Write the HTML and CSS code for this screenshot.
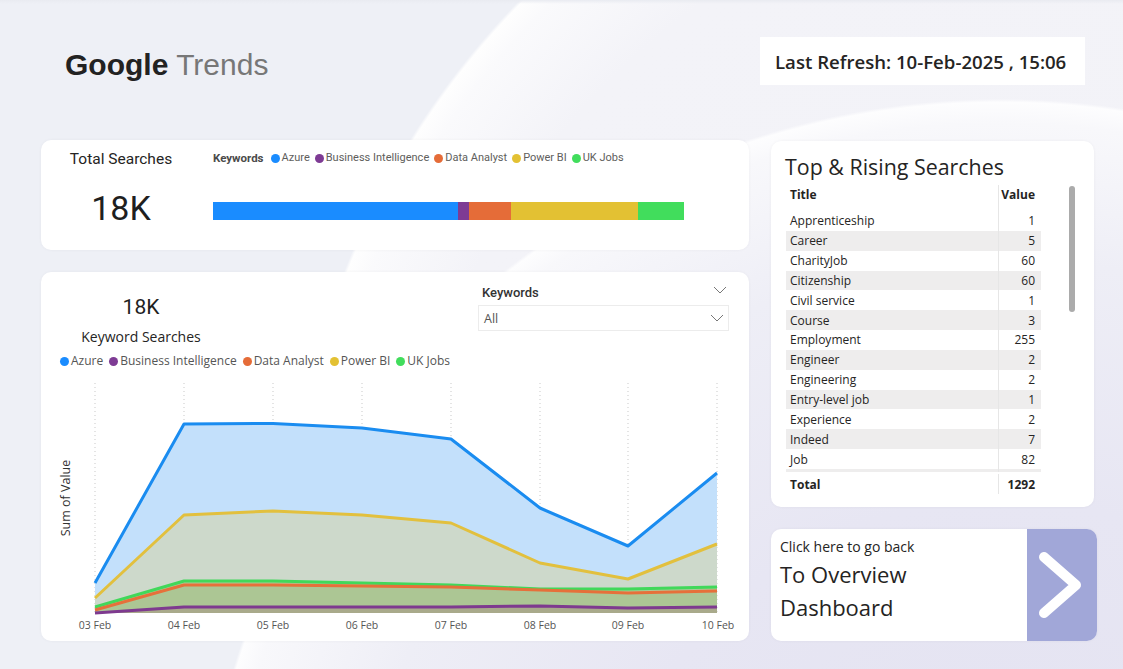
FILE: index.html
```html
<!DOCTYPE html>
<html lang="en">
<head>
<meta charset="utf-8">
<title>Google Trends</title>
<link rel="stylesheet" href="styles.css">
</head>
<body>
<div class="page">
  <div class="col-left">
    <h1 class="title"><b>Google</b> <span>Trends</span></h1>

    <section class="card card-total">
      <div class="kpi">
        <div class="kpi-label">Total Searches</div>
        <div class="kpi-value">18K</div>
      </div>
      <div class="breakdown">
        <div class="legend legend-din">
          <span class="legend-title">Keywords</span>
          <span class="li"><i class="dot azure"></i>Azure</span>
          <span class="li"><i class="dot bi"></i>Business Intelligence</span>
          <span class="li"><i class="dot da"></i>Data Analyst</span>
          <span class="li"><i class="dot pbi"></i>Power BI</span>
          <span class="li"><i class="dot uk"></i>UK Jobs</span>
        </div>
        <div class="bar">
          <div class="seg azure" style="width:245px"></div>
          <div class="seg bi" style="width:11px"></div>
          <div class="seg da" style="width:42px"></div>
          <div class="seg pbi" style="width:127px"></div>
          <div class="seg uk" style="width:46px"></div>
        </div>
      </div>
    </section>

    <section class="card card-chart">
      <div class="chart-head">
        <div class="kpi2">
          <div class="kpi2-value">18K</div>
          <div class="kpi2-label">Keyword Searches</div>
        </div>
        <div class="slicer">
          <div class="slicer-head">
            <span>Keywords</span>
            <svg class="chev" width="14" height="8" viewBox="0 0 14 8"><path d="M1 1 L7 7 L13 1" fill="none" stroke="#777" stroke-width="1"/></svg>
          </div>
          <div class="slicer-box">
            <span>All</span>
            <svg class="chev" width="14" height="8" viewBox="0 0 14 8"><path d="M1 1 L7 7 L13 1" fill="none" stroke="#777" stroke-width="1"/></svg>
          </div>
        </div>
      </div>
      <div class="legend legend-chart">
        <span class="li"><i class="dot azure"></i>Azure</span>
        <span class="li"><i class="dot bi"></i>Business Intelligence</span>
        <span class="li"><i class="dot da"></i>Data Analyst</span>
        <span class="li"><i class="dot pbi"></i>Power BI</span>
        <span class="li"><i class="dot uk"></i>UK Jobs</span>
      </div>
      <svg class="chart" width="708" height="262" viewBox="41 375 708 262">
        <g class="grid" stroke="#c9c9c9" stroke-width="1" stroke-dasharray="1 3">
          <line x1="95" y1="383" x2="95" y2="613"/>
          <line x1="184" y1="383" x2="184" y2="613"/>
          <line x1="273" y1="383" x2="273" y2="613"/>
          <line x1="362" y1="383" x2="362" y2="613"/>
          <line x1="451" y1="383" x2="451" y2="613"/>
          <line x1="540" y1="383" x2="540" y2="613"/>
          <line x1="628" y1="383" x2="628" y2="613"/>
          <line x1="717" y1="383" x2="717" y2="613"/>
        </g>
        <polygon fill="#c3e0fb" points="95,583 184,424 273,423.5 362,428 451,439 540,508 628,546 717,473 717,613 95,613"/>
        <polygon fill="#cdd9cb" points="95,598 184,515 273,511 362,515 451,523 540,563 628,579 717,544 717,613 95,613"/>
        <polygon fill="#aec997" points="95,607 184,581 273,581 362,583 451,585 540,589 628,589 717,587 717,613 95,613"/>
        <polygon fill="#acc694" points="95,610 184,585 273,585 362,586 451,587 540,590 628,593 717,591 717,613 95,613"/>
        <polygon fill="#a9aa8b" points="95,613 184,607 273,607 362,607 451,607 540,606 628,608 717,607 717,613 95,613"/>
        <g fill="none" stroke-width="3" stroke-linejoin="round">
          <polyline stroke="#1a8cf0" points="95,583 184,424 273,423.5 362,428 451,439 540,508 628,546 717,473"/>
          <polyline stroke="#e2c03e" points="95,598 184,515 273,511 362,515 451,523 540,563 628,579 717,544"/>
          <polyline stroke="#41d85a" points="95,607 184,581 273,581 362,583 451,585 540,589 628,589 717,587"/>
          <polyline stroke="#e6703a" points="95,610 184,585 273,585 362,586 451,587 540,590 628,593 717,591"/>
          <polyline stroke="#7e3a8f" points="95,613 184,607 273,607 362,607 451,607 540,606 628,608 717,607"/>
        </g>
        <text class="axis-title" x="67" y="498" transform="rotate(-90 67 498)" text-anchor="middle" dominant-baseline="middle">Sum of Value</text>
        <g class="xlab" text-anchor="middle">
          <text x="95" y="629">03 Feb</text>
          <text x="184" y="629">04 Feb</text>
          <text x="273" y="629">05 Feb</text>
          <text x="362" y="629">06 Feb</text>
          <text x="451" y="629">07 Feb</text>
          <text x="540" y="629">08 Feb</text>
          <text x="628" y="629">09 Feb</text>
          <text x="718" y="629">10 Feb</text>
        </g>
      </svg>
    </section>
  </div>

  <div class="col-right">
    <div class="refresh">Last Refresh: 10-Feb-2025 , 15:06</div>

    <section class="card card-table">
      <h2 class="table-title">Top &amp; Rising Searches</h2>
      <div class="table-wrap">
        <div class="table">
          <div class="row head"><span class="c-title">Title</span><span class="c-val">Value</span></div>
          <div class="tbody">
            <div class="row"><span class="c-title">Apprenticeship</span><span class="c-val">1</span></div>
            <div class="row alt"><span class="c-title">Career</span><span class="c-val">5</span></div>
            <div class="row"><span class="c-title">CharityJob</span><span class="c-val">60</span></div>
            <div class="row alt"><span class="c-title">Citizenship</span><span class="c-val">60</span></div>
            <div class="row"><span class="c-title">Civil service</span><span class="c-val">1</span></div>
            <div class="row alt"><span class="c-title">Course</span><span class="c-val">3</span></div>
            <div class="row"><span class="c-title">Employment</span><span class="c-val">255</span></div>
            <div class="row alt"><span class="c-title">Engineer</span><span class="c-val">2</span></div>
            <div class="row"><span class="c-title">Engineering</span><span class="c-val">2</span></div>
            <div class="row alt"><span class="c-title">Entry-level job</span><span class="c-val">1</span></div>
            <div class="row"><span class="c-title">Experience</span><span class="c-val">2</span></div>
            <div class="row alt"><span class="c-title">Indeed</span><span class="c-val">7</span></div>
            <div class="row"><span class="c-title">Job</span><span class="c-val">82</span></div>
            <div class="row alt"><span class="c-title"></span><span class="c-val"></span></div>
          </div>
          <div class="row total"><span class="c-title">Total</span><span class="c-val">1292</span></div>
        </div>
        <div class="scrollbar"></div>
      </div>
    </section>

    <a class="card back-btn" href="#">
      <div class="back-text">
        <div class="back-small">Click here to go back</div>
        <div class="back-big">To Overview<br>Dashboard</div>
      </div>
      <div class="back-arrow">
        <svg width="70" height="112" viewBox="0 0 70 112"><path d="M17 28 L49 56 L17 84" fill="none" stroke="#fff" stroke-width="10" stroke-linecap="round" stroke-linejoin="round"/></svg>
      </div>
    </a>
  </div>
</div>
</body>
</html>
```

FILE: styles.css
```css
* { box-sizing: border-box; }
html, body { margin: 0; padding: 0; }
body {
  width: 1123px;
  height: 669px;
  overflow: hidden;
  font-family: "Open Sans", "Noto Sans", sans-serif;
  color: #252423;
  background:
    linear-gradient(#e9ebf1, rgba(238,240,246,0) 4px),
    radial-gradient(circle 801px at 1000px 900px, #e3e2f1 0%, #e7e6f3 50%, #eeeef6 80%, #f8f8fb 97%, #fdfdfe 99.6%, rgba(253,253,254,0) 100%),
    radial-gradient(circle 805px at 1094px 564px, #f2f2f7 0%, #f3f3f8 85%, #fafafc 97%, #fefefe 99.6%, rgba(254,254,254,0) 100%),
    #eef0f6;
}
.page {
  display: flex;
  gap: 22px;
  padding-left: 41px;
  height: 669px;
}
.col-left { width: 708px; display: flex; flex-direction: column; }
.col-right { width: 326px; display: flex; flex-direction: column; padding-top: 37px; }

.title {
  margin: 47px 0 0 0;
  padding-left: 24px;
  font-family: "Liberation Sans", Arial, sans-serif;
  font-size: 30px;
  line-height: 36px;
  font-weight: 400;
}
.title b { color: #222; font-weight: 700; }
.title span { color: #777; }

.card {
  background: #fff;
  border-radius: 10px;
  box-shadow: 0 0 3px rgba(60, 60, 90, 0.06);
}

/* Card 1 */
.card-total {
  margin-top: 57px;
  height: 110px;
  display: flex;
}
.kpi { width: 160px; text-align: center; padding-top: 9px; font-family: Roboto, sans-serif; }
.kpi-label { font-size: 15.5px; line-height: 20px; color: #252423; }
.kpi-value { font-size: 34px; line-height: 40px; margin-top: 19px; color: #1f1f1f; }
.breakdown { margin-left: 12px; padding-top: 10px; }
.legend { display: flex; align-items: center; white-space: nowrap; }
.legend-din { font-family: Roboto, sans-serif; font-size: 11px; line-height: 16px; color: #605e5c; gap: 5px; }
.legend-title { font-weight: 700; font-size: 11.5px; color: #4a4a4a; margin-right: 2px; }
.li { display: inline-flex; align-items: center; }
.dot { display: inline-block; width: 9px; height: 9px; border-radius: 50%; margin-right: 2px; }
.azure { background: #1a8cff; }
.bi { background: #7e3b94; }
.da { background: #e56c38; }
.pbi { background: #e3c133; }
.uk { background: #41dd5c; }
.bar { display: flex; height: 18px; margin-top: 36px; width: 471px; }
.seg { height: 18px; }

/* Card 2 */
.card-chart { margin-top: 22px; height: 369px; overflow: hidden; }
.chart-head { display: flex; }
.kpi2 { width: 200px; text-align: center; padding-top: 23px; }
.kpi2-value { font-family: Roboto, sans-serif; font-size: 21px; line-height: 24px; color: #1f1f1f; }
.kpi2-label { font-size: 14px; line-height: 20px; margin-top: 8px; color: #252423; }
.slicer { margin-left: 237px; width: 251px; padding-top: 11px; }
.slicer-head { display: flex; justify-content: space-between; align-items: center; padding: 0 2px 0 4px; height: 18px; font-family: Roboto, sans-serif; font-weight: 500; font-size: 13px; color: #333; }
.slicer-head .chev { margin-top: -4px; }
.slicer-box { margin-top: 4px; height: 26px; border: 1px solid #ececec; display: flex; justify-content: space-between; align-items: center; padding: 0 4px 0 5px; font-size: 12.5px; color: #555; }
.legend-chart { margin-top: 6px; padding-left: 19px; font-size: 12px; line-height: 16px; color: #555; gap: 6px; }
.legend-chart .dot { margin-right: 2px; }
.chart { display: block; margin-top: 6px; }
.axis-title { font-family: "Open Sans", sans-serif; font-size: 12.5px; fill: #333; }
.xlab text { font-family: "Open Sans", sans-serif; font-size: 10.5px; fill: #555; }

/* Right column */
.refresh {
  margin-left: -11px;
  width: 325px;
  height: 48px;
  background: #fff;
  display: flex;
  align-items: center;
  padding-left: 15px;
  font-size: 18.6px;
  font-weight: 600;
  color: #252423;
  white-space: nowrap;
}

.card-table { margin-top: 56px; width: 323px; height: 366px; padding: 12px 0 0 15px; }
.table-title { margin: 0 0 4px -1px; font-size: 21.4px; line-height: 28px; font-weight: 400; color: #252423; }
.table-wrap { display: flex; }
.table { width: 255px; font-size: 12px; }
.row { display: flex; height: 19.85px; align-items: center; }
.row.head { height: 26px; align-items: flex-start; font-weight: 700; }
.row.head span { line-height: 20px; }
.c-title { width: 212px; padding-left: 4px; }
.c-val { width: 43px; text-align: right; padding-right: 6px; border-left: 1px solid #e6e6e6; align-self: stretch; display: flex; align-items: center; justify-content: flex-end; }
.row.head .c-val { align-items: flex-start; }
.row.alt { background: #eeeded; }
.tbody { height: 261px; overflow: hidden; }
.row.total { height: 22px; font-weight: 700; padding-top: 2px; }
.scrollbar { width: 6px; height: 126px; margin: 1px 0 0 28px; background: #ababab; border-radius: 3px; }

.back-btn {
  margin-top: 22px;
  height: 112px;
  display: flex;
  overflow: hidden;
  text-decoration: none;
  color: #252423;
}
.back-text { width: 256px; padding: 8px 0 0 9px; }
.back-small { font-size: 14px; line-height: 20px; }
.back-big { font-size: 22px; line-height: 33px; margin-top: 1px; }
.back-arrow { width: 70px; background: #a1a7d8; }
.back-arrow svg { display: block; }
```
